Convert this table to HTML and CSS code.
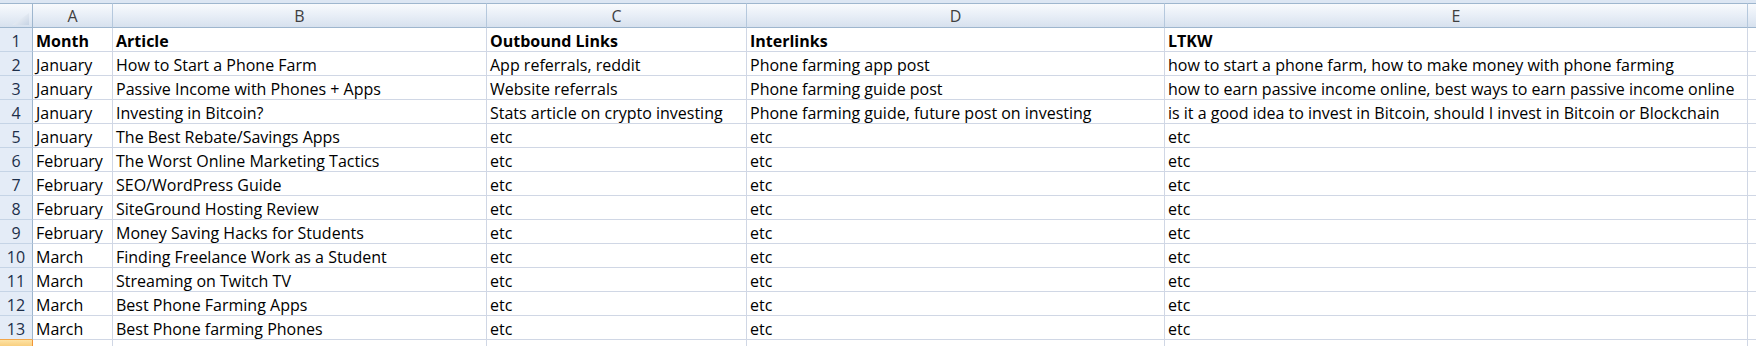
FILE: index.html
```html
<!DOCTYPE html>
<html>
<head>
<meta charset="utf-8">
<link rel="stylesheet" href="styles.css">
</head>
<body>
<div class="topstrip"></div>
<div class="sheet">
  <div class="corner"><svg width="17" height="12" viewBox="0 0 17 12"><defs><linearGradient id="tg" x1="0" y1="0" x2="1" y2="1"><stop offset="0" stop-color="#ffffff"/><stop offset="1" stop-color="#c6d3e4"/></linearGradient></defs><polygon points="17,0 17,12 0,12" fill="url(#tg)"/></svg></div>
  <div class="colhead">A</div><div class="colhead">B</div><div class="colhead">C</div><div class="colhead">D</div><div class="colhead">E</div><div class="colhead last"></div>

  <div class="rowhead">1</div><div class="cell b">Month</div><div class="cell b">Article</div><div class="cell b">Outbound Links</div><div class="cell b">Interlinks</div><div class="cell b">LTKW</div><div class="cell last"></div>
  <div class="rowhead">2</div><div class="cell">January</div><div class="cell">How to Start a Phone Farm</div><div class="cell">App referrals, reddit</div><div class="cell">Phone farming app post</div><div class="cell">how to start a phone farm, how to make money with phone farming</div><div class="cell last"></div>
  <div class="rowhead">3</div><div class="cell">January</div><div class="cell">Passive Income with Phones + Apps</div><div class="cell">Website referrals</div><div class="cell">Phone farming guide post</div><div class="cell">how to earn passive income online, best ways to earn passive income online</div><div class="cell last"></div>
  <div class="rowhead">4</div><div class="cell">January</div><div class="cell">Investing in Bitcoin?</div><div class="cell">Stats article on crypto investing</div><div class="cell">Phone farming guide, future post on investing</div><div class="cell">is it a good idea to invest in Bitcoin, should I invest in Bitcoin or Blockchain</div><div class="cell last"></div>
  <div class="rowhead">5</div><div class="cell">January</div><div class="cell">The Best Rebate/Savings Apps</div><div class="cell">etc</div><div class="cell">etc</div><div class="cell">etc</div><div class="cell last"></div>
  <div class="rowhead">6</div><div class="cell">February</div><div class="cell">The Worst Online Marketing Tactics</div><div class="cell">etc</div><div class="cell">etc</div><div class="cell">etc</div><div class="cell last"></div>
  <div class="rowhead">7</div><div class="cell">February</div><div class="cell">SEO/WordPress Guide</div><div class="cell">etc</div><div class="cell">etc</div><div class="cell">etc</div><div class="cell last"></div>
  <div class="rowhead">8</div><div class="cell">February</div><div class="cell">SiteGround Hosting Review</div><div class="cell">etc</div><div class="cell">etc</div><div class="cell">etc</div><div class="cell last"></div>
  <div class="rowhead">9</div><div class="cell">February</div><div class="cell">Money Saving Hacks for Students</div><div class="cell">etc</div><div class="cell">etc</div><div class="cell">etc</div><div class="cell last"></div>
  <div class="rowhead">10</div><div class="cell">March</div><div class="cell">Finding Freelance Work as a Student</div><div class="cell">etc</div><div class="cell">etc</div><div class="cell">etc</div><div class="cell last"></div>
  <div class="rowhead">11</div><div class="cell">March</div><div class="cell">Streaming on Twitch TV</div><div class="cell">etc</div><div class="cell">etc</div><div class="cell">etc</div><div class="cell last"></div>
  <div class="rowhead">12</div><div class="cell">March</div><div class="cell">Best Phone Farming Apps</div><div class="cell">etc</div><div class="cell">etc</div><div class="cell">etc</div><div class="cell last"></div>
  <div class="rowhead sel-above">13</div><div class="cell">March</div><div class="cell">Best Phone farming Phones</div><div class="cell">etc</div><div class="cell">etc</div><div class="cell">etc</div><div class="cell last"></div>
  <div class="rowhead sel"></div><div class="cell"></div><div class="cell"></div><div class="cell"></div><div class="cell"></div><div class="cell"></div><div class="cell last"></div>
</div>
</body>
</html>
```

FILE: styles.css
```css
html, body {
  margin: 0;
  padding: 0;
  background: #ffffff;
  overflow: hidden;
}
body {
  width: 1756px;
  height: 346px;
  font-family: "Open Sans", "Lato", sans-serif;
  font-size: 16px;
  color: #000000;
}
.topstrip {
  height: 3px;
  background: #dce6f3;
}
.sheet {
  display: grid;
  grid-template-columns: 33px 80px 374px 260px 418px 583px 8px;
  grid-template-rows: 25px repeat(13, 24px) 6px;
}
.corner, .colhead {
  box-sizing: border-box;
  border-top: 1px solid #9eb6ce;
  border-bottom: 1px solid #9eb6ce;
  border-right: 1px solid #b5c8dd;
  background: linear-gradient(#f8fafd, #e6edf6 55%, #d7e1ee);
}
.corner {
  border-right: 1px solid #9eb6ce;
  display: flex;
  align-items: flex-end;
  justify-content: flex-end;
  padding: 0 3px 2px 0;
}
.corner svg { display: block; }
.colhead {
  display: flex;
  align-items: flex-end;
  justify-content: center;
  line-height: 18px;
  padding-bottom: 2px;
  color: #3f3f3f;
}
.colhead.last { border-right: none; }
.rowhead {
  box-sizing: border-box;
  background: #e4ecf7;
  border-right: 1px solid #9eb6ce;
  border-bottom: 1px solid #c5d4e6;
  display: flex;
  align-items: flex-end;
  justify-content: center;
  line-height: 18px;
  padding-bottom: 1px;
  color: #1d2f4a;
}
.rowhead.sel-above { border-bottom-color: #f2a64a; }
.rowhead.sel {
  background: linear-gradient(#fde3a6, #f9cf7f);
  border-right-color: #f29536;
  border-bottom: none;
}
.cell {
  box-sizing: border-box;
  border-right: 1px solid #d0d7e5;
  border-bottom: 1px solid #d0d7e5;
  display: flex;
  align-items: flex-end;
  padding: 0 0 1px 3px;
  line-height: 18px;
  white-space: nowrap;
  overflow: hidden;
}
.sheet > .cell:nth-last-child(-n+6) { border-bottom: none; }
.cell.last { border-right: none; }
.b { font-weight: bold; }
```
